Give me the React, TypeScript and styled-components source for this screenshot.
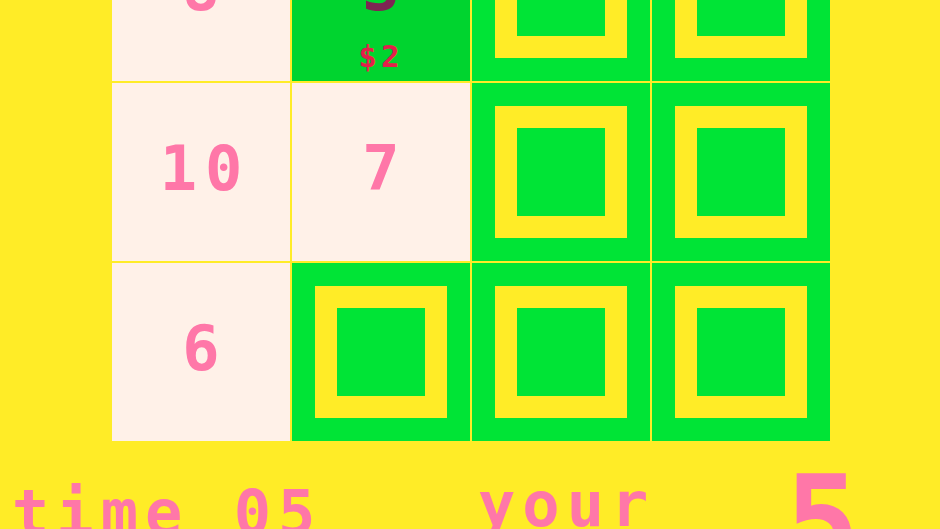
import React from "react";
import styled, { createGlobalStyle } from "styled-components";

const Global = createGlobalStyle`
  html, body {
    margin: 0;
    padding: 0;
    background: #ffec27;
    overflow: hidden;
  }
  body {
    font-family: "DejaVu Sans Mono", "Liberation Mono", monospace;
    font-weight: bold;
  }
`;

const Page = styled.div`
  width: 940px;
  height: 529px;
  overflow: hidden;
  background: #ffec27;
`;

const Scroll = styled.div`
  margin-top: -97px;
`;

const Board = styled.div`
  display: grid;
  grid-template-columns: repeat(4, 178px);
  grid-auto-rows: 178px;
  gap: 2px;
  margin-left: 112px;
  width: max-content;
`;

type CellKind = "open" | "picked" | "closed";

const Cell = styled.div<{ $kind: CellKind }>`
  position: relative;
  display: flex;
  align-items: center;
  justify-content: center;
  box-sizing: border-box;
  padding: ${(p) => (p.$kind === "closed" ? "23px" : "0 0 6px 0")};
  background: ${(p) =>
    p.$kind === "open" ? "#fff1e8" : p.$kind === "picked" ? "#00d42f" : "#00e436"};
`;

const Number = styled.span<{ $dark?: boolean }>`
  font-size: 62px;
  line-height: 1;
  letter-spacing: 8px;
  margin-right: -8px;
  color: ${(p) => (p.$dark ? "#7e2553" : "#ff77a8")};
`;

const Price = styled.span`
  position: absolute;
  left: 0;
  right: 0;
  bottom: 9px;
  text-align: center;
  font-size: 31px;
  line-height: 1;
  letter-spacing: 4px;
  color: #e3204a;
`;

const Ring = styled.div`
  width: 100%;
  height: 100%;
  box-sizing: border-box;
  border: 22px solid #ffec27;
  background: #00e436;
`;

const Footer = styled.div`
  display: grid;
  grid-template-columns: 466px 307px auto;
  align-items: start;
  padding: 18px 0 0 12px;
`;

const Label = styled.div<{ $offset: number }>`
  margin-top: ${(p) => p.$offset}px;
  font-size: 62px;
  line-height: 1;
  letter-spacing: 7px;
  color: #ff77a8;
  white-space: pre;
`;

const Big = styled.div`
  font-size: 124px;
  line-height: 1;
  color: #ff77a8;
`;

type CellData = { kind: CellKind; value?: string; dark?: boolean; price?: string };

const cells: CellData[] = [
  { kind: "open", value: "8" },
  { kind: "picked", value: "3", dark: true, price: "$2" },
  { kind: "closed" },
  { kind: "closed" },
  { kind: "open", value: "10" },
  { kind: "open", value: "7" },
  { kind: "closed" },
  { kind: "closed" },
  { kind: "open", value: "6" },
  { kind: "closed" },
  { kind: "closed" },
  { kind: "closed" },
];

export default function App() {
  return (
    <Page>
      <Global />
      <Scroll>
        <Board>
          {cells.map((c, i) => (
            <Cell key={i} $kind={c.kind}>
              {c.kind === "closed" ? (
                <Ring />
              ) : (
                <Number $dark={c.dark}>{c.value}</Number>
              )}
              {c.price && <Price>{c.price}</Price>}
            </Cell>
          ))}
        </Board>
        <Footer>
          <Label $offset={23}>time 05</Label>
          <Label $offset={15}>your</Label>
          <Big>5</Big>
        </Footer>
      </Scroll>
    </Page>
  );
}
